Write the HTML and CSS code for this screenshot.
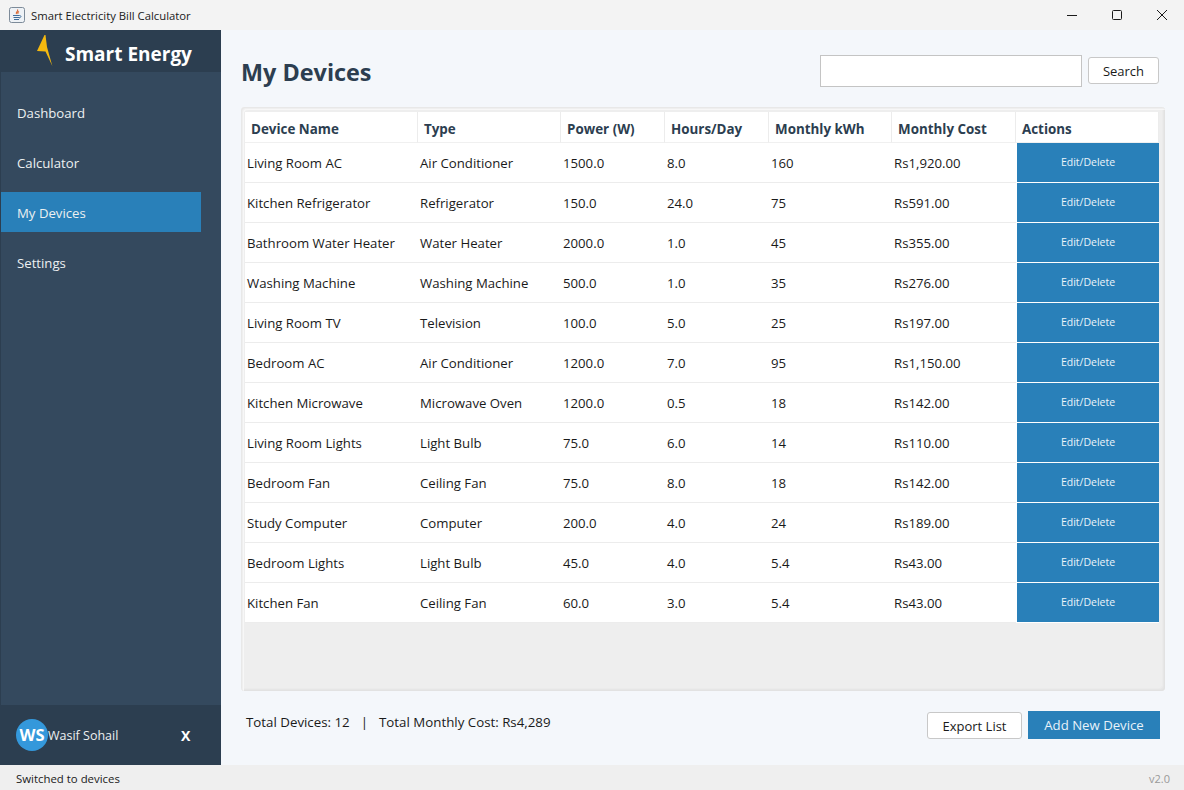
FILE: index.html
```html
<!DOCTYPE html>
<html lang="en">
<head>
    <meta charset="UTF-8">
    <title>Smart Electricity Bill Calculator</title>
    <link rel="stylesheet" href="styles.css">
</head>
<body>
    <div class="titlebar">
        <div class="titlebar-left">
            <svg class="app-icon" width="16" height="16" viewBox="0 0 16 16">
                <rect x="0.5" y="0.5" width="15" height="15" rx="2" fill="#eef2f6" stroke="#7d8b99"/>
                <path d="M8.500 2.500c1.500 1.500-2.500 2.600-1 4.500M10 4.500c-1.500.7-1.500 1.500-.8 2.300" fill="none" stroke="#d9622b" stroke-width="1.100"/>
                <path d="M4 8.500h6.500M4.500 10.500h6M5 12.500h5M10.500 8.500c2 0 2 2-.5 2.500" fill="none" stroke="#3f6d9b" stroke-width="1"/>
            </svg>
            <span>Smart Electricity Bill Calculator</span>
        </div>
        <div class="window-buttons">
            <svg width="12" height="12" viewBox="0 0 12 12"><path d="M1 6.500h10" stroke="#1a1a1a" fill="none"/></svg>
            <svg width="12" height="12" viewBox="0 0 12 12"><rect x="1.500" y="1.500" width="9" height="9" rx="1" stroke="#1a1a1a" fill="none"/></svg>
            <svg width="12" height="12" viewBox="0 0 12 12"><path d="M1 1l10 10M11 1L1 11" stroke="#1a1a1a" fill="none"/></svg>
        </div>
    </div>

    <div class="app">
        <aside class="sidebar">
            <div class="brand">
                <svg class="bolt" width="20" height="34" viewBox="0 0 20 34">
                    <polygon points="9.500,0 2,16 10.500,16.500 17.300,31 12,12 10.500,0" fill="#f5b90f"/>
                </svg>
                <span class="brand-name">Smart Energy</span>
            </div>
            <nav class="nav">
                <a class="nav-item">Dashboard</a>
                <a class="nav-item">Calculator</a>
                <a class="nav-item active">My Devices</a>
                <a class="nav-item">Settings</a>
            </nav>
            <div class="user">
                <div class="avatar">WS</div>
                <span class="user-name">Wasif Sohail</span>
                <span class="logout">X</span>
            </div>
        </aside>

        <main class="content">
            <div class="content-head">
                <h1>My Devices</h1>
                <div class="search">
                    <input type="text" class="search-input">
                    <button class="btn btn-search">Search</button>
                </div>
            </div>

            <div class="table-panel">
                <table class="devices">
                    <colgroup>
                        <col class="c-name"><col class="c-type"><col class="c-power"><col class="c-hours">
                        <col class="c-kwh"><col class="c-cost"><col class="c-actions">
                    </colgroup>
                    <thead>
                        <tr>
                            <th>Device Name</th><th>Type</th><th>Power (W)</th><th>Hours/Day</th>
                            <th>Monthly kWh</th><th>Monthly Cost</th><th>Actions</th>
                        </tr>
                    </thead>
                    <tbody>
                        <tr><td>Living Room AC</td><td>Air Conditioner</td><td>1500.0</td><td>8.0</td><td>160</td><td>Rs1,920.00</td><td class="action">Edit/Delete</td></tr>
                        <tr><td>Kitchen Refrigerator</td><td>Refrigerator</td><td>150.0</td><td>24.0</td><td>75</td><td>Rs591.00</td><td class="action">Edit/Delete</td></tr>
                        <tr><td>Bathroom Water Heater</td><td>Water Heater</td><td>2000.0</td><td>1.0</td><td>45</td><td>Rs355.00</td><td class="action">Edit/Delete</td></tr>
                        <tr><td>Washing Machine</td><td>Washing Machine</td><td>500.0</td><td>1.0</td><td>35</td><td>Rs276.00</td><td class="action">Edit/Delete</td></tr>
                        <tr><td>Living Room TV</td><td>Television</td><td>100.0</td><td>5.0</td><td>25</td><td>Rs197.00</td><td class="action">Edit/Delete</td></tr>
                        <tr><td>Bedroom AC</td><td>Air Conditioner</td><td>1200.0</td><td>7.0</td><td>95</td><td>Rs1,150.00</td><td class="action">Edit/Delete</td></tr>
                        <tr><td>Kitchen Microwave</td><td>Microwave Oven</td><td>1200.0</td><td>0.5</td><td>18</td><td>Rs142.00</td><td class="action">Edit/Delete</td></tr>
                        <tr><td>Living Room Lights</td><td>Light Bulb</td><td>75.0</td><td>6.0</td><td>14</td><td>Rs110.00</td><td class="action">Edit/Delete</td></tr>
                        <tr><td>Bedroom Fan</td><td>Ceiling Fan</td><td>75.0</td><td>8.0</td><td>18</td><td>Rs142.00</td><td class="action">Edit/Delete</td></tr>
                        <tr><td>Study Computer</td><td>Computer</td><td>200.0</td><td>4.0</td><td>24</td><td>Rs189.00</td><td class="action">Edit/Delete</td></tr>
                        <tr><td>Bedroom Lights</td><td>Light Bulb</td><td>45.0</td><td>4.0</td><td>5.4</td><td>Rs43.00</td><td class="action">Edit/Delete</td></tr>
                        <tr><td>Kitchen Fan</td><td>Ceiling Fan</td><td>60.0</td><td>3.0</td><td>5.4</td><td>Rs43.00</td><td class="action">Edit/Delete</td></tr>
                    </tbody>
                </table>
            </div>

            <div class="content-foot">
                <div class="totals">
                    <span>Total Devices: 12</span>
                    <span class="sep">|</span>
                    <span>Total Monthly Cost: Rs4,289</span>
                </div>
                <div class="foot-buttons">
                    <button class="btn btn-export">Export List</button>
                    <button class="btn-primary">Add New Device</button>
                </div>
            </div>
        </main>
    </div>

    <div class="statusbar">
        <span>Switched to devices</span>
        <span class="version">v2.0</span>
    </div>
</body>
</html>
```

FILE: styles.css
```css
* {
    box-sizing: border-box;
}
html, body {
    height: 100%;
}
body {
    margin: 0;
    display: flex;
    flex-direction: column;
    height: 790px;
    overflow: hidden;
    font-family: "Open Sans", "Noto Sans", Arial, sans-serif;
    font-size: 13px;
    color: #1a1a1a;
    background-color: #f3f3f3;
}

/* barra de titulo */
.titlebar {
    height: 30px;
    display: flex;
    justify-content: space-between;
    align-items: center;
    padding-left: 9px;
    background-color: #f3f3f3;
    font-size: 11.3px;
}
.titlebar-left {
    display: flex;
    align-items: center;
    gap: 6px;
}
.window-buttons {
    display: flex;
    gap: 33px;
    padding-right: 16px;
}

.app {
    flex: 1;
    display: flex;
    min-height: 0;
}

/* sidebar */
.sidebar {
    width: 221px;
    display: flex;
    flex-direction: column;
    background-color: #34495e;
    border-left: 1px solid #2c3e50;
}
.brand {
    height: 42px;
    display: flex;
    align-items: flex-start;
    background-color: #2c3e50;
    padding: 5px 0 0 34px;
}
.bolt {
    flex-shrink: 0;
}
.brand-name {
    margin: 5px 0 0 10px;
    color: #fff;
    font-size: 19px;
    font-weight: 700;
    line-height: 28px;
}
.nav {
    flex: 1;
    display: flex;
    flex-direction: column;
    gap: 10px;
    padding-top: 20px;
}
.nav-item {
    width: 200px;
    height: 40px;
    padding-left: 16px;
    line-height: 42px;
    color: #ecf0f1;
    font-size: 13.2px;
}
.nav-item.active {
    background-color: #2980b9;
}
.user {
    height: 60px;
    display: flex;
    align-items: center;
    padding-left: 15px;
    background-color: #2c3e50;
    color: #ecf0f1;
}
.avatar {
    width: 32px;
    height: 32px;
    border-radius: 50%;
    background-color: #3498db;
    color: #fff;
    font-size: 16.5px;
    font-weight: 700;
    line-height: 32px;
    text-align: center;
}
.user-name {
    width: 133px;
    font-size: 12.5px;
}
.logout {
    color: #fff;
    font-size: 14px;
    font-weight: 700;
}

/* contenido */
.content {
    flex: 1;
    display: flex;
    flex-direction: column;
    min-width: 0;
    padding: 0 19px 0 20px;
    background-color: #f4f7fb;
}
.content-head {
    height: 77px;
    display: flex;
    justify-content: space-between;
    align-items: center;
    padding: 5px 6px 0 0;
}
h1 {
    margin: 2px 0 0;
    color: #2c3e50;
    font-size: 23.4px;
    font-weight: 700;
}
.search {
    display: flex;
    align-items: center;
    gap: 6px;
}
.search-input {
    width: 262px;
    height: 32px;
    border: 1px solid #c4c4c4;
    background-color: #fff;
}
.btn {
    height: 27px;
    border: 1px solid #c8c8c8;
    border-radius: 3px;
    background-color: #fff;
    color: #1a1a1a;
    font-family: inherit;
    font-size: 13px;
    padding: 0;
}
.btn-search {
    width: 71px;
    margin-bottom: 1px;
}

.table-panel {
    height: 584px;
    padding: 5px 6px 7px 4px;
    border-radius: 4px;
    background-color: #eeeeee;
    box-shadow: inset 1px 1px 0 #e8e8e8, inset 2px 2px 0 #efefef, inset 3px 3px 0 #f7f7f7,
        inset -1px -1px 0 #e2e2e2, inset -2px -2px 0 #e6e6e6, inset -3px -3px 0 #ebebeb;
}
.devices {
    width: 914px;
    table-layout: fixed;
    border-collapse: separate;
    border-spacing: 0;
    background-color: #fff;
}
.c-name { width: 173px; }
.c-type { width: 143px; }
.c-power { width: 104px; }
.c-hours { width: 104px; }
.c-kwh { width: 123px; }
.c-cost { width: 124px; }
.c-actions { width: 143px; }
.devices th {
    height: 31px;
    padding: 3px 0 0 6px;
    text-align: left;
    color: #2c3e50;
    font-size: 13.4px;
    font-weight: 700;
    border-right: 1px solid #ececec;
    border-bottom: 1px solid #f0f0f0;
}
.devices td {
    height: 40px;
    padding: 1px 0 0 2px;
    border-bottom: 1px solid #ececec;
    color: #1a1a1a;
    font-size: 13.2px;
    white-space: nowrap;
}
.devices td.action {
    padding: 0 0 2px;
    background-color: #2980b9;
    border-left: 1px solid #fff;
    border-bottom: 1px solid #fff;
    color: #ecf4fa;
    font-size: 10.5px;
    text-align: center;
}

.content-foot {
    flex: 1;
    display: flex;
    justify-content: space-between;
    padding: 20px 5px 0 5px;
}
.totals {
    display: flex;
    gap: 11px;
    padding-top: 2px;
    font-size: 13.3px;
}
.foot-buttons {
    display: flex;
    align-items: flex-start;
    gap: 6px;
}
.btn-export {
    width: 95px;
    height: 27px;
    margin-top: 1px;
}
.btn-primary {
    width: 132px;
    height: 28px;
    border: none;
    background-color: #2980b9;
    color: #e8f2f9;
    font-family: inherit;
    font-size: 13.2px;
}

/* barra de estado */
.statusbar {
    height: 25px;
    display: flex;
    justify-content: space-between;
    align-items: center;
    padding: 1px 14px 0 16px;
    background-color: #efefef;
    font-size: 11.4px;
}
.version {
    color: #999;
    font-size: 11px;
}
```
